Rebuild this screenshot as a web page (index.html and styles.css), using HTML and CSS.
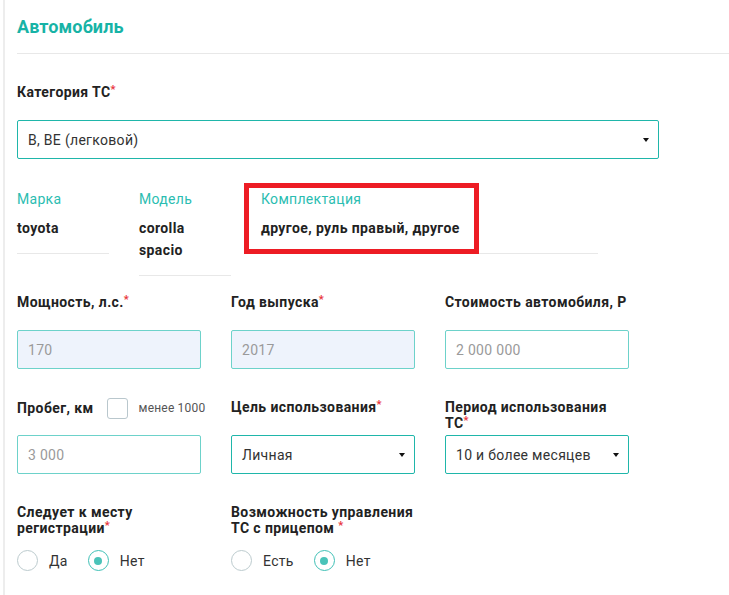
FILE: index.html
```html
<!DOCTYPE html>
<html lang="ru">
<head>
<meta charset="utf-8">
<title>Автомобиль</title>
<link rel="stylesheet" href="styles.css">
</head>
<body>
<div class="page">
  <h2 class="title">Автомобиль</h2>
  <div class="divider"></div>

  <div class="field-wide">
    <div class="label">Категория ТС<span class="req">*</span></div>
    <div class="select"><span>B, BE (легковой)</span><i class="arrow"></i></div>
  </div>

  <div class="specs">
    <div class="spec w92">
      <div class="spec-label">Марка</div>
      <div class="spec-value">toyota</div>
    </div>
    <div class="spec w92">
      <div class="spec-label">Модель</div>
      <div class="spec-value">corolla<br>spacio</div>
    </div>
    <div class="spec w337">
      <div class="spec-label">Комплектация</div>
      <div class="spec-value">другое, руль правый, другое</div>
      <div class="mark"></div>
    </div>
  </div>

  <div class="grid">
    <div class="field">
      <div class="label">Мощность, л.с.<span class="req">*</span></div>
      <input class="input disabled" value="170" readonly>
    </div>
    <div class="field">
      <div class="label">Год выпуска<span class="req">*</span></div>
      <input class="input disabled" value="2017" readonly>
    </div>
    <div class="field">
      <div class="label">Стоимость автомобиля, Р</div>
      <input class="input" value="2 000 000" readonly>
    </div>

    <div class="field">
      <div class="label">
        <div class="label-row">
          <span class="nowrap">Пробег, км</span>
          <span class="checkbox"></span>
          <span class="check-text">менее 1000</span>
        </div>
      </div>
      <input class="input" value="3 000" readonly>
    </div>
    <div class="field">
      <div class="label">Цель использования<span class="req">*</span></div>
      <div class="select"><span>Личная</span><i class="arrow"></i></div>
    </div>
    <div class="field">
      <div class="label">Период использования<br>ТС<span class="req">*</span></div>
      <div class="select"><span>10 и более месяцев</span><i class="arrow"></i></div>
    </div>

    <div class="field">
      <div class="label">Следует к месту<br>регистрации<span class="req">*</span></div>
      <div class="radios">
        <div class="radio"><span class="radio-dot"></span><span>Да</span></div>
        <div class="radio on"><span class="radio-dot"></span><span>Нет</span></div>
      </div>
    </div>
    <div class="field">
      <div class="label">Возможность управления<br>ТС с прицепом <span class="req">*</span></div>
      <div class="radios">
        <div class="radio"><span class="radio-dot"></span><span>Есть</span></div>
        <div class="radio on"><span class="radio-dot"></span><span>Нет</span></div>
      </div>
    </div>
  </div>
</div>
</body>
</html>
```
FILE: styles.css
```css
html, body {
  margin: 0;
  padding: 0;
  background: #fff;
}

body {
  font-family: Roboto, "Noto Sans", "Liberation Sans", sans-serif;
  color: #222;
  letter-spacing: 0.3px;
}

.page {
  margin-left: 3px;
  border-left: 2px solid #ededed;
  padding-left: 12px;
  min-height: 595px;
  box-sizing: border-box;
}

.title {
  margin: 0;
  padding-top: 16px;
  font-size: 18px;
  line-height: 22px;
  font-weight: 700;
  letter-spacing: 0.1px;
  color: #17b3a6;
}

.divider {
  height: 1px;
  background: #e8e8e8;
  margin-top: 15px;
}

.field-wide {
  margin-top: 30px;
  width: 642px;
}

.label {
  min-height: 36px;
  font-size: 14px;
  line-height: 16px;
  font-weight: 700;
  letter-spacing: 0.4px;
  color: #222;
}

.req {
  color: #e8343b;
  font-size: 11px;
  line-height: 11px;
  vertical-align: top;
}

.select {
  box-sizing: border-box;
  height: 39px;
  border: 1px solid #1fb6aa;
  border-radius: 2px;
  display: flex;
  align-items: center;
  justify-content: space-between;
  padding: 0 9px 0 10px;
  font-size: 14px;
  color: #333;
  background: #fff;
}

.arrow {
  display: block;
  width: 0;
  height: 0;
  border-left: 3.5px solid transparent;
  border-right: 3.5px solid transparent;
  border-top: 4px solid #111;
}

.specs {
  display: flex;
  align-items: flex-start;
  gap: 30px;
  margin-top: 32px;
}

.spec {
  position: relative;
  border-bottom: 1px solid #e8e8e8;
  padding-bottom: 14px;
}

.w92 { width: 92px; }
.w337 { width: 337px; }

.spec-label {
  font-size: 14px;
  line-height: 16px;
  color: #2bbdb1;
}

.spec-value {
  margin-top: 10px;
  font-size: 14px;
  line-height: 22px;
  font-weight: 700;
  letter-spacing: 0.4px;
  color: #222;
}

.mark {
  position: absolute;
  left: -17px;
  top: -8px;
  width: 235px;
  height: 71px;
  box-sizing: border-box;
  border: 5px solid #ed1c24;
}

.grid {
  display: grid;
  grid-template-columns: repeat(3, 184px);
  column-gap: 30px;
  row-gap: 30px;
  margin-top: 18px;
}

.input {
  display: block;
  box-sizing: border-box;
  width: 100%;
  height: 39px;
  margin: 0;
  border: 1px solid #6dd2ca;
  border-radius: 2px;
  padding: 0 10px;
  font-family: inherit;
  font-size: 14px;
  letter-spacing: 0.3px;
  color: #9a9a9a;
  background: #fff;
  outline: none;
}

.input.disabled {
  background: #eef3fc;
}

.label-row {
  display: flex;
  align-items: center;
  height: 18px;
}

.nowrap {
  white-space: nowrap;
  flex-shrink: 0;
}

.checkbox {
  flex-shrink: 0;
  width: 21px;
  height: 21px;
  box-sizing: border-box;
  margin-left: 13px;
  border: 1px solid #b9c7cd;
  border-radius: 3px;
  background: #fff;
}

.check-text {
  flex-shrink: 0;
  margin-left: 11px;
  font-size: 12px;
  font-weight: 400;
  letter-spacing: 0.2px;
  color: #555;
  white-space: nowrap;
}

.radios {
  display: flex;
  gap: 20px;
  margin-top: 10px;
}

.radio {
  display: flex;
  align-items: center;
  gap: 11px;
  font-size: 14px;
  color: #333;
}

.radio-dot {
  width: 21px;
  height: 21px;
  box-sizing: border-box;
  border: 1px solid #bccbce;
  border-radius: 50%;
  display: flex;
  align-items: center;
  justify-content: center;
}

.radio.on .radio-dot {
  border-color: #3fc0b6;
}

.radio.on .radio-dot::after {
  content: "";
  width: 8px;
  height: 8px;
  border-radius: 50%;
  background: #4ac3b9;
}
```
